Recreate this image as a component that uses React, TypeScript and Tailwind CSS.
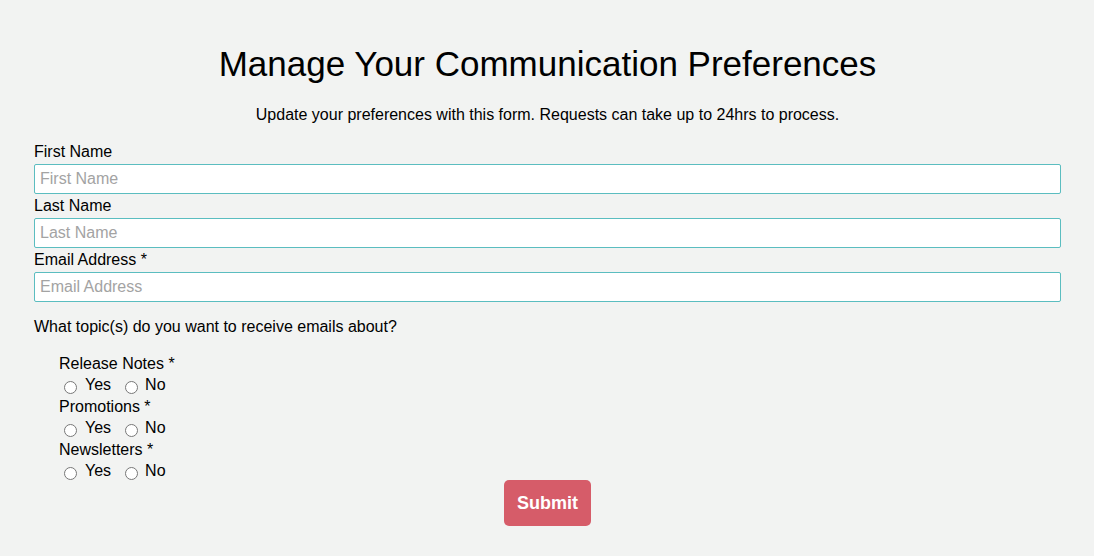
import React from "react";

const fields = [
  { label: "First Name", placeholder: "First Name", type: "text" },
  { label: "Last Name", placeholder: "Last Name", type: "text" },
  { label: "Email Address *", placeholder: "Email Address", type: "email" },
];

const topics = [
  { name: "release", label: "Release Notes *" },
  { name: "promotions", label: "Promotions *" },
  { name: "newsletters", label: "Newsletters *" },
];

export default function App() {
  return (
    <div className="min-h-[556px] bg-[#f2f3f2] pl-[34px] pr-[33px] pt-[44px] text-black font-['Liberation_Sans',Arial,sans-serif]">
      <h1 className="text-center text-[35px] leading-[40px]">
        Manage Your Communication Preferences
      </h1>
      <p className="mt-[19px] text-center text-[16px] leading-[24px]">
        Update your preferences with this form. Requests can take up to 24hrs to process.
      </p>

      <form className="mt-[13px]" onSubmit={(e) => e.preventDefault()}>
        {fields.map((f) => (
          <div key={f.label}>
            <label className="block text-[16px] leading-[24px]">{f.label}</label>
            <input
              type={f.type}
              placeholder={f.placeholder}
              className="block h-[30px] w-full rounded-[2px] border border-[#5bbdc0] bg-white px-[5px] text-[16px] outline-none placeholder:text-[#a3a3a3]"
            />
          </div>
        ))}

        <p className="mt-[13px] text-[16px] leading-[24px]">
          What topic(s) do you want to receive emails about?
        </p>

        <div className="mt-[14px] pl-[25px]">
          {topics.map((t) => (
            <div key={t.name}>
              <div className="text-[16px] leading-[21px]">{t.label}</div>
              <div className="flex h-[22px] items-center text-[16px]">
                <label className="flex items-center">
                  <input type="radio" name={t.name} className="m-0 ml-[5px] mt-[5px] h-[13px] w-[13px]" />
                  <span className="ml-[8px]">Yes</span>
                </label>
                <label className="ml-[14px] flex items-center">
                  <input type="radio" name={t.name} className="m-0 mt-[5px] h-[13px] w-[13px]" />
                  <span className="ml-[7px]">No</span>
                </label>
              </div>
            </div>
          ))}
        </div>

        <div className="-mt-[2px] flex justify-center">
          <button
            type="submit"
            className="h-[46px] w-[87px] rounded-[5px] bg-[#d65c69] text-[18px] font-bold text-white"
          >
            Submit
          </button>
        </div>
      </form>
    </div>
  );
}
